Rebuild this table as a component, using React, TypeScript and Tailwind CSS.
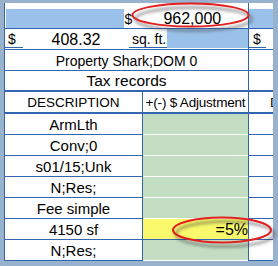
import React from "react";

const font = { fontFamily: '"Liberation Sans", Arial, sans-serif' };

function Ellipse({ cx, cy, rx, ry }: { cx: number; cy: number; rx: number; ry: number }) {
  return (
    <g>
      <ellipse cx={cx + 3} cy={cy + 4} rx={rx} ry={ry} fill="none" stroke="rgba(60,60,60,0.45)" strokeWidth={3} filter="url(#blur)" />
      <ellipse cx={cx} cy={cy} rx={rx} ry={ry} fill="none" stroke="#e1201f" strokeWidth={2} />
    </g>
  );
}

export default function App() {
  const rows = ["ArmLth", "Conv;0", "s01/15;Unk", "N;Res;", "Fee simple", "4150 sf", "N;Res;"];

  return (
    <div className="relative w-[278px] h-[266px] overflow-hidden bg-[#98b1cd] pt-[3px] pl-[4px] text-black" style={font}>
      <div className="w-[269px] h-[258px] overflow-hidden bg-white border-l border-[#3465b0] flex flex-col text-[15px] leading-none">
        {/* partial row above */}
        <div className="flex h-[6px] shrink-0">
          <div className="w-[243px]" />
          <div className="w-[25px] border-l border-[#3465b0]" />
        </div>

        {/* row 1 */}
        <div className="flex h-[20px] shrink-0 border-b border-[#3465b0]">
          <div className="w-[118px] bg-[#99c1ea] ml-[1px]" />
          <div className="w-[125px] flex items-center">
            <span className="pl-[1px] w-[15px] text-[14px]">$</span>
            <span className="flex-1 text-center text-[16px] pr-[2px]">962,000</span>
          </div>
          <div className="w-[25px] border-l border-[#3465b0] bg-[#99c1ea]" />
        </div>

        {/* row 2 */}
        <div className="flex h-[21px] shrink-0 border-b border-[#3465b0]">
          <div className="w-[18px] mb-[1px] border-b border-[#3465b0] flex items-center pl-[3px] pt-[2px] text-[14px]">$</div>
          <div className="w-[106px] flex items-center justify-center pt-[2px] text-[16px]">408.32</div>
          <div className="w-[38px] mb-[1px] border-b border-[#3465b0] flex items-center pl-[3px] pt-[2px] text-[14px] whitespace-nowrap">sq. ft.</div>
          <div className="w-[81px] mb-[1px] bg-[#99c1ea]" />
          <div className="w-[25px] border-l border-[#3465b0] flex">
            <div className="w-[17px] mb-[1px] border-b border-[#3465b0] flex items-center pl-[4px] pt-[2px] text-[14px]">$</div>
          </div>
        </div>

        {/* merged rows */}
        <div className="flex h-[21px] shrink-0 border-b border-[#3465b0]">
          <div className="w-[243px] flex items-center justify-center text-[14px] pt-[1px]">Property Shark;DOM 0</div>
          <div className="w-[25px] border-l border-[#3465b0]" />
        </div>
        <div className="flex h-[21px] shrink-0 border-b-2 border-[#3465b0]">
          <div className="w-[243px] flex items-center justify-center pt-[1px] text-[15.5px]">Tax records</div>
          <div className="w-[25px] border-l border-[#3465b0]" />
        </div>

        {/* header */}
        <div className="flex h-[22px] shrink-0 border-b-2 border-[#3465b0] text-[13.5px]">
          <div className="w-[137px] flex items-center justify-center pt-[1px]">DESCRIPTION</div>
          <div className="w-[106px] border-l border-[#3465b0] flex items-center justify-center pt-[1px] whitespace-nowrap tracking-[-0.2px]">+(-) $ Adjustment</div>
          <div className="w-[25px] border-l border-[#3465b0] flex items-center pl-[21px] pt-[1px]">D</div>
        </div>

        {/* data rows */}
        {rows.map((label, i) => {
          const yellow = label === "4150 sf";
          return (
            <div key={i} className="flex h-[21px] shrink-0 border-b border-[#3465b0]">
              <div className="w-[137px] flex items-center justify-center pt-[1px]">{label}</div>
              <div className="w-[106px] border-l border-[#3465b0] flex flex-col">
                {yellow ? (
                  <div className="flex-1 bg-[#f9f96b] flex items-center justify-end pt-[1px] text-[16px]">=5%</div>
                ) : (
                  <div className="flex-1 bg-[#c3ddc3] border-b border-white -mb-[1px]" />
                )}
              </div>
              <div className="w-[25px] border-l border-[#3465b0]" />
            </div>
          );
        })}
      </div>

      <svg className="absolute inset-0 pointer-events-none" width={278} height={266} viewBox="0 0 278 266">
        <defs>
          <filter id="blur" x="-20%" y="-50%" width="140%" height="200%">
            <feGaussianBlur stdDeviation="1.6" />
          </filter>
        </defs>
        <Ellipse cx={190.5} cy={15} rx={58} ry={11.5} />
        <Ellipse cx={222} cy={230} rx={49} ry={12.5} />
      </svg>
    </div>
  );
}
